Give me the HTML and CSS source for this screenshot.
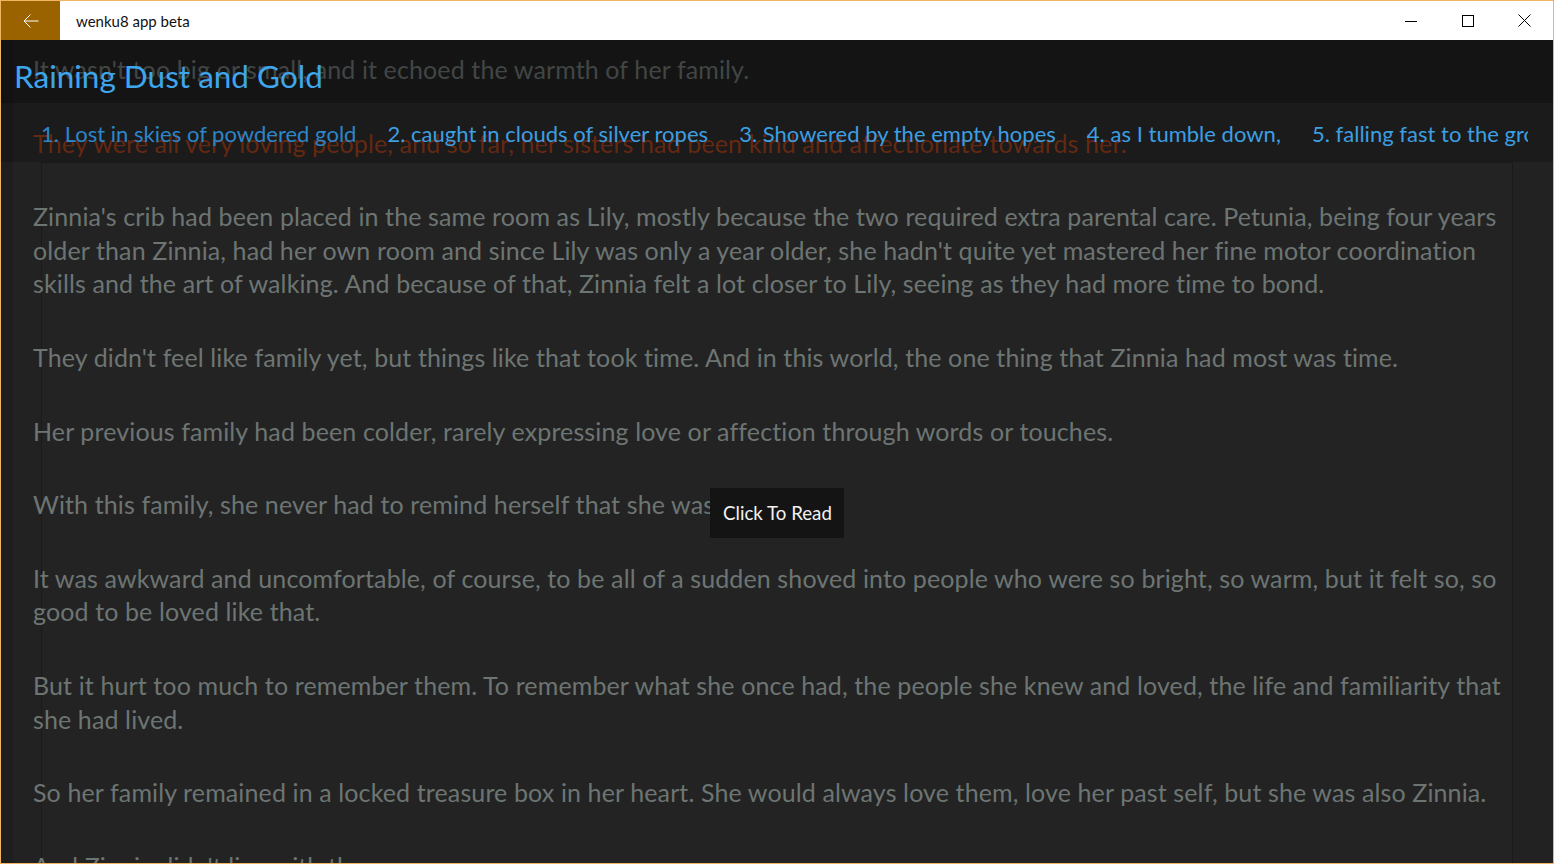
FILE: index.html
```html
<!DOCTYPE html>
<html lang="en">
<head>
<meta charset="utf-8">
<title>wenku8 app beta</title>
<link rel="stylesheet" href="styles.css">
</head>
<body>
<div class="window">
  <div class="titlebar">
    <div class="back">
      <svg width="16" height="14" viewBox="0 0 16 14"><path d="M7.5 0.5 L1 7 L7.5 13.5 M1 7 H15.5" fill="none" stroke="#fff" stroke-width="1"/></svg>
    </div>
    <div class="app-title">wenku8 app beta</div>
    <div class="controls">
      <div class="ctl"><svg width="12" height="12" viewBox="0 0 12 12"><path d="M0 6.5 H12" stroke="#000" stroke-width="1"/></svg></div>
      <div class="ctl"><svg width="12" height="12" viewBox="0 0 12 12"><rect x="0.5" y="0.5" width="11" height="11" fill="none" stroke="#000" stroke-width="1"/></svg></div>
      <div class="ctl"><svg width="13" height="13" viewBox="0 0 13 13"><path d="M0.5 0.5 L12.5 12.5 M12.5 0.5 L0.5 12.5" stroke="#000" stroke-width="1"/></svg></div>
    </div>
  </div>
  <div class="app">
    <div class="rail"></div>
    <div class="reader">
      <div class="panel"></div>
      <article class="text">
        <p>It wasn't too big or small, and it echoed the warmth of her family.</p>
        <p class="current">They were all very loving people, and so far, her sisters had been kind and affectionate towards her.</p>
        <p>Zinnia's crib had been placed in the same room as Lily, mostly because the two required extra parental care. Petunia, being four years older than Zinnia, had her own room and since Lily was only a year older, she hadn't quite yet mastered her fine motor coordination skills and the art of walking. And because of that, Zinnia felt a lot closer to Lily, seeing as they had more time to bond.</p>
        <p>They didn't feel like family yet, but things like that took time. And in this world, the one thing that Zinnia had most was time.</p>
        <p>Her previous family had been colder, rarely expressing love or affection through words or touches.</p>
        <p>With this family, she never had to remind herself that she was loved.</p>
        <p>It was awkward and uncomfortable, of course, to be all of a sudden shoved into people who were so bright, so warm, but it felt so, so good to be loved like that.</p>
        <p>But it hurt too much to remember them. To remember what she once had, the people she knew and loved, the life and familiarity that she had lived.</p>
        <p>So her family remained in a locked treasure box in her heart. She would always love them, love her past self, but she was also Zinnia.</p>
        <p>And Zinnia didn't live with them anymore.</p>
      </article>
    </div>
    <header class="book-header">
      <h1 class="book-title">Raining Dust and Gold</h1>
    </header>
    <nav class="chapters">
      <div class="chapter-list">
        <span class="chapter selected">1. Lost in skies of powdered gold</span>
        <span class="chapter">2. caught in clouds of silver ropes</span>
        <span class="chapter">3. Showered by the empty hopes</span>
        <span class="chapter">4. as I tumble down,</span>
        <span class="chapter">5. falling fast to the ground</span>
      </div>
    </nav>
    <button class="click-read">Click To Read</button>
  </div>
</div>
</body>
</html>
```

FILE: styles.css
```css
html, body {
  margin: 0;
  padding: 0;
  background: #222;
}

.window {
  width: 1554px;
  height: 864px;
  box-sizing: border-box;
  border: 1px solid #f0b462;
  display: flex;
  flex-direction: column;
  overflow: hidden;
  font-family: Lato, "Noto Sans", sans-serif;
}

.titlebar {
  flex: none;
  height: 39px;
  display: flex;
  align-items: center;
  background: #fff;
}

.back {
  width: 59px;
  height: 39px;
  background: #9b6200;
  display: flex;
  align-items: center;
  justify-content: center;
}

.app-title {
  flex: 1;
  margin-left: 16px;
  font-size: 15px;
  color: #111;
}

.controls {
  display: flex;
}

.ctl {
  width: 57px;
  height: 39px;
  display: flex;
  align-items: center;
  justify-content: center;
}

.app {
  flex: 1;
  position: relative;
  display: grid;
  grid-template-columns: 12px 1fr;
  overflow: hidden;
  background: #222;
}

.rail {
  background: #1e1e1e;
}

.reader {
  display: grid;
  min-width: 0;
}

.panel {
  grid-area: 1 / 1;
  margin: 122px 40px 1px 28px;
  border: 1px solid #1a1a1a;
  background: #232323;
}

.text {
  grid-area: 1 / 1;
  padding: 13px 28px 0 20px;
  font-size: 25px;
  line-height: 33.6px;
  color: #6d7573;
  letter-spacing: 0.12px;
}

.text p {
  margin: 0 0 40px;
}

.text p.current {
  color: #7f3216;
}

.book-header {
  position: absolute;
  top: 0;
  left: 0;
  right: 0;
  height: 63px;
  background: rgba(0, 0, 0, 0.4);
  display: flex;
  align-items: center;
  padding-left: 13px;
}

.book-title {
  margin: 8px 0 0;
  font-size: 31.5px;
  font-weight: 400;
  color: #3ea6ec;
}

.chapters {
  position: absolute;
  top: 63px;
  left: 0;
  right: 0;
  height: 59px;
  background: rgba(0, 0, 0, 0.2);
  padding: 0 25px 0 40px;
  display: flex;
  align-items: center;
}

.chapter-list {
  flex: 1;
  display: flex;
  gap: 31px;
  overflow: hidden;
  white-space: nowrap;
  margin-top: 2px;
}

.chapter {
  font-size: 22px;
  color: #3c9fe2;
  letter-spacing: 0.02px;
}

.chapter.selected {
  color: #2c86c9;
}

.click-read {
  position: absolute;
  left: 709px;
  top: 448px;
  width: 134px;
  height: 50px;
  border: none;
  background: #141414;
  color: #f2f2f2;
  font-family: Lato, "Noto Sans", sans-serif;
  font-size: 18.7px;
  padding: 0 0 0 13px;
  text-align: left;
}
```
